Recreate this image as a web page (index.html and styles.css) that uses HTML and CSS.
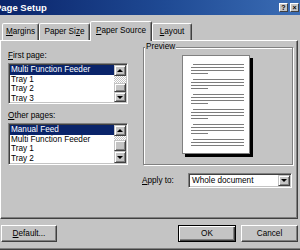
FILE: index.html
```html
<!DOCTYPE html>
<html>
<head>
<meta charset="utf-8">
<link rel="stylesheet" href="styles.css">
</head>
<body>
<div class="window">
  <div class="titlebar">
    <span class="title">Page Setup</span>
    <div class="capbtns"><span class="capbtn">?</span><span class="capbtn">×</span></div>
  </div>
  <div class="tabs">
    <div class="tab t-margins"><u>M</u>argins</div>
    <div class="tab t-size">Paper Si<u>z</u>e</div>
    <div class="tab t-source active"><u>P</u>aper Source</div>
    <div class="tab t-layout"><u>L</u>ayout</div>
  </div>
  <div class="panel">
    <div class="col-left">
      <div class="label"><u>F</u>irst page:</div>
      <div class="listbox lb1">
        <ul class="items">
          <li class="sel">Multi Function Feeder</li>
          <li>Tray 1</li>
          <li>Tray 2</li>
          <li>Tray 3</li>
        </ul>
        <div class="vscroll">
          <div class="sbtn up"></div>
          <div class="track"></div>
          <div class="thumb"></div>
          <div class="sbtn down"></div>
        </div>
      </div>
      <div class="label label2"><u>O</u>ther pages:</div>
      <div class="listbox lb2">
        <ul class="items">
          <li class="sel">Manual Feed</li>
          <li>Multi Function Feeder</li>
          <li>Tray 1</li>
          <li>Tray 2</li>
        </ul>
        <div class="vscroll">
          <div class="sbtn up"></div>
          <div class="track"></div>
          <div class="thumb"></div>
          <div class="sbtn down"></div>
        </div>
      </div>
    </div>
    <div class="col-right">
      <fieldset class="preview">
        <legend>Preview</legend>
        <div class="page">
          <div class="para"><div class="ln ind"></div><div class="ln"></div><div class="ln"></div><div class="ln short"></div></div>
          <div class="para"><div class="ln ind"></div><div class="ln"></div><div class="ln"></div><div class="ln short"></div></div>
          <div class="para"><div class="ln ind"></div><div class="ln"></div><div class="ln"></div><div class="ln short"></div></div>
          <div class="para"><div class="ln ind"></div><div class="ln"></div><div class="ln"></div><div class="ln short"></div></div>
          <div class="para"><div class="ln ind"></div><div class="ln"></div><div class="ln"></div><div class="ln short"></div></div>
          <div class="para"><div class="ln ind"></div><div class="ln"></div><div class="ln"></div></div>
        </div>
      </fieldset>
      <div class="apply">
        <span class="apply-label"><u>A</u>pply to:</span>
        <div class="combo"><span class="combo-text">Whole document</span><span class="sbtn dd down"></span></div>
      </div>
    </div>
  </div>
  <div class="buttons">
    <div class="btn b-default"><u>D</u>efault...</div>
    <div class="btn b-ok">OK</div>
    <div class="btn b-cancel">Cancel</div>
  </div>
</div>
</body>
</html>
```

FILE: styles.css
```css
body {
  margin: 0;
  width: 300px;
  height: 250px;
  overflow: hidden;
  background: #c4c4c4;
  font: 8.2px/10px "Liberation Sans", Arial, sans-serif;
  color: #000;
}
u { text-decoration-thickness: 1px; text-underline-offset: 1px; }

.window {
  height: 250px;
  box-sizing: border-box;
  border-bottom: 1px solid #404040;
  box-shadow: inset 0 -1px #808080;
  display: flex;
  flex-direction: column;
}

.titlebar {
  flex: none;
  height: 15px;
  background: linear-gradient(to right, #0a246a 0%, #1f4a94 55%, #3b6db5 100%);
  display: flex;
  align-items: center;
}
.title {
  margin-left: -5px;
  color: #fff;
  font-weight: bold;
  font-size: 9.5px;
  white-space: nowrap;
}
.capbtns {
  margin-left: auto;
  margin-right: 1px;
  display: flex;
  gap: 2px;
}
.capbtn {
  width: 9px;
  height: 9px;
  box-sizing: border-box;
  background: #c4c4c4;
  border: 1px solid;
  border-color: #fff #404040 #404040 #fff;
  font: bold 7px/7px "Liberation Sans", Arial, sans-serif;
  text-align: center;
}

.tabs {
  flex: none;
  display: flex;
  align-items: flex-end;
  height: 20px;
  margin-top: 6px;
  margin-bottom: -1px;
  padding-left: 2px;
  position: relative;
  z-index: 1;
}
.tab {
  height: 17px;
  margin-bottom: 1px;
  box-sizing: border-box;
  border: 1px solid;
  border-bottom: none;
  border-color: #fff #404040 transparent #fff;
  box-shadow: inset -1px 0 #808080;
  border-radius: 2px 2px 0 0;
  text-align: center;
  line-height: 15px;
  white-space: nowrap;
  background: #c4c4c4;
}
.tab.active {
  height: 20px;
  margin-bottom: 0;
  line-height: 17px;
}
.t-margins { width: 37px; }
.t-size { width: 51px; }
.t-source { width: 62px; }
.t-layout { width: 40px; }

.panel {
  flex: none;
  width: 298px;
  height: 179px;
  box-sizing: border-box;
  border: 1px solid;
  border-color: #fff #404040 #404040 #fff;
  box-shadow: inset -1px -1px #808080;
  display: grid;
  grid-template-columns: 120px 150px;
  column-gap: 15px;
  align-items: start;
  padding: 1px 0 0 7px;
}

.col-left { padding-top: 9px; }
.label { height: 10px; white-space: nowrap; }
.label2 { margin-top: 7px; }

.listbox {
  margin-top: 2px;
  box-sizing: border-box;
  background: #fff;
  border: 1px solid;
  border-color: #808080 #fff #fff #808080;
  box-shadow: inset 1px 1px #404040, inset -1px -1px #c4c4c4;
  padding: 1px;
  display: flex;
  overflow: hidden;
}
.lb1 { height: 41px; }
.lb2 { height: 42px; }

.items {
  flex: 1;
  list-style: none;
  margin: 0;
  padding: 0;
  overflow: hidden;
}
.items li {
  height: 9.6px;
  line-height: 9.6px;
  padding-left: 1px;
  white-space: nowrap;
}
.items li.sel {
  background: #0a246a;
  color: #fff;
}

.vscroll {
  width: 12px;
  display: flex;
  flex-direction: column;
}
.sbtn, .thumb {
  box-sizing: border-box;
  background: #c4c4c4;
  border: 1px solid;
  border-color: #c4c4c4 #404040 #404040 #c4c4c4;
  box-shadow: inset 1px 1px #fff, inset -1px -1px #808080;
  display: flex;
  align-items: center;
  justify-content: center;
}
.sbtn::after {
  content: "";
  width: 0;
  height: 0;
  border-left: 3px solid transparent;
  border-right: 3px solid transparent;
}
.sbtn.up::after { border-bottom: 3px solid #000; }
.sbtn.down::after { border-top: 3px solid #000; }
.track {
  background: repeating-conic-gradient(#fff 0 25%, #c4c4c4 0 50%) 0 0 / 2px 2px;
}
.lb1 .up { height: 11px; }
.lb1 .track { height: 7px; }
.lb1 .thumb { height: 9px; }
.lb1 .down { height: 10px; }
.lb2 .up { height: 11px; }
.lb2 .track { height: 4px; }
.lb2 .thumb { height: 11px; }
.lb2 .down { height: 12px; }

.preview {
  margin: 0;
  padding: 0 0 10px;
  min-width: 0;
  border: 1px solid #808080;
  box-shadow: inset 1px 1px #fff, 1px 1px #fff;
}
.preview legend {
  padding: 0 1px;
  margin-left: 1px;
  background: #c4c4c4;
  line-height: 10px;
}
.page {
  width: 68px;
  height: 99px;
  box-sizing: border-box;
  margin: 3px 0 0 38px;
  background: #fff;
  border: 1px solid #808080;
  box-shadow: 3px 3px 0 #000;
  padding: 8px 5px 0 8px;
}
.para {
  display: flex;
  flex-direction: column;
  gap: 2px;
  margin-bottom: 5px;
}
.ln { height: 1px; background: #7c7c7c; }
.ln.ind { margin-left: 2px; }
.ln.short { width: 17px; }

.apply {
  display: flex;
  align-items: center;
  margin: 8px 0 0 -1px;
}
.apply-label { width: 46px; white-space: nowrap; }
.combo {
  width: 104px;
  height: 15px;
  box-sizing: border-box;
  background: #fff;
  border: 1px solid;
  border-color: #808080 #fff #fff #808080;
  box-shadow: inset 1px 1px #404040, inset -1px -1px #c4c4c4;
  padding: 1px;
  display: flex;
  align-items: center;
}
.combo-text { flex: 1; padding-left: 2px; white-space: nowrap; }
.combo .dd { width: 12px; height: 11px; }

.buttons {
  flex: none;
  display: flex;
  margin-top: 6px;
  padding: 0 2px 0 1px;
}
.btn {
  height: 17px;
  box-sizing: border-box;
  border: 1px solid;
  border-color: #fff #404040 #404040 #fff;
  box-shadow: inset -1px -1px #808080;
  text-align: center;
  line-height: 15px;
  white-space: nowrap;
}
.b-default { width: 56px; }
.b-ok {
  width: 58px;
  margin-left: auto;
  border-color: #000;
  box-shadow: inset 1px 1px #fff, inset -1px -1px #404040, inset -2px -2px #808080;
}
.b-cancel { width: 57px; margin-left: 5px; }
```
